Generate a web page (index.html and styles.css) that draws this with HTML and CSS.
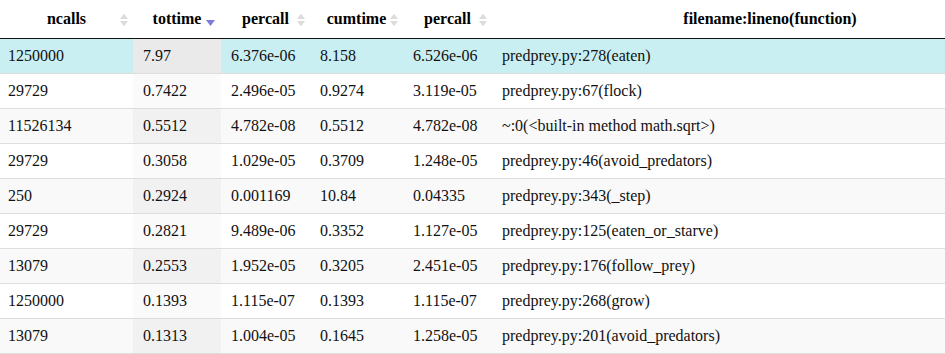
FILE: index.html
```html
<!DOCTYPE html>
<html lang="en">
<head>
  <meta charset="UTF-8">
  <title>Profile stats</title>
  <link rel="stylesheet" href="styles.css">
</head>
<body>

<div class="wrap">
  <table class="stats">
    <colgroup>
      <col class="w-ncalls">
      <col class="w-tottime">
      <col class="w-percall">
      <col class="w-cumtime">
      <col class="w-percall2">
      <col class="w-file">
    </colgroup>
    <thead>
      <tr>
        <th class="sortable">ncalls
          <svg class="sort-both" viewBox="0 0 9 14"><polygon points="0,6 4.5,0 9,6"/><polygon points="0,8 9,8 4.5,14"/></svg>
        </th>
        <th class="sortable">tottime
          <svg class="sort-desc" viewBox="0 0 9 6"><polygon points="0,0 9,0 4.5,6"/></svg>
        </th>
        <th class="sortable">percall
          <svg class="sort-both" viewBox="0 0 9 14"><polygon points="0,6 4.5,0 9,6"/><polygon points="0,8 9,8 4.5,14"/></svg>
        </th>
        <th class="sortable">cumtime
          <svg class="sort-both" viewBox="0 0 9 14"><polygon points="0,6 4.5,0 9,6"/><polygon points="0,8 9,8 4.5,14"/></svg>
        </th>
        <th class="sortable">percall
          <svg class="sort-both" viewBox="0 0 9 14"><polygon points="0,6 4.5,0 9,6"/><polygon points="0,8 9,8 4.5,14"/></svg>
        </th>
        <th>filename:lineno(function)</th>
      </tr>
    </thead>
    <tbody>
      <tr class="odd hover"><td>1250000</td><td class="sorted">7.97</td><td>6.376e-06</td><td>8.158</td><td>6.526e-06</td><td>predprey.py:278(eaten)</td></tr>
      <tr class="even"><td>29729</td><td class="sorted">0.7422</td><td>2.496e-05</td><td>0.9274</td><td>3.119e-05</td><td>predprey.py:67(flock)</td></tr>
      <tr class="odd"><td>11526134</td><td class="sorted">0.5512</td><td>4.782e-08</td><td>0.5512</td><td>4.782e-08</td><td>~:0(&lt;built-in method math.sqrt&gt;)</td></tr>
      <tr class="even"><td>29729</td><td class="sorted">0.3058</td><td>1.029e-05</td><td>0.3709</td><td>1.248e-05</td><td>predprey.py:46(avoid_predators)</td></tr>
      <tr class="odd"><td>250</td><td class="sorted">0.2924</td><td>0.001169</td><td>10.84</td><td>0.04335</td><td>predprey.py:343(_step)</td></tr>
      <tr class="even"><td>29729</td><td class="sorted">0.2821</td><td>9.489e-06</td><td>0.3352</td><td>1.127e-05</td><td>predprey.py:125(eaten_or_starve)</td></tr>
      <tr class="odd"><td>13079</td><td class="sorted">0.2553</td><td>1.952e-05</td><td>0.3205</td><td>2.451e-05</td><td>predprey.py:176(follow_prey)</td></tr>
      <tr class="even"><td>1250000</td><td class="sorted">0.1393</td><td>1.115e-07</td><td>0.1393</td><td>1.115e-07</td><td>predprey.py:268(grow)</td></tr>
      <tr class="odd"><td>13079</td><td class="sorted">0.1313</td><td>1.004e-05</td><td>0.1645</td><td>1.258e-05</td><td>predprey.py:201(avoid_predators)</td></tr>
    </tbody>
  </table>
</div>

</body>
</html>
```

FILE: styles.css
```css
html, body {
  margin: 0;
  padding: 0;
  background: #fff;
  overflow: hidden;
}

body {
  font-family: "Liberation Serif", "DejaVu Serif", serif;
  font-size: 16px;
  color: #111;
}

.wrap {
  width: 100%;
  overflow: hidden;
}

.stats {
  width: 1048px;
  table-layout: fixed;
  border-collapse: separate;
  border-spacing: 0;
  font-family: "Liberation Serif", serif;
  font-size: 16px;
}

.w-ncalls { width: 133px; }
.w-tottime { width: 88px; }
.w-percall { width: 89px; }
.w-cumtime { width: 93px; }
.w-percall2 { width: 89px; }
.w-file { width: 556px; }

.stats th {
  position: relative;
  padding: 10px 10px;
  line-height: 18px;
  font-weight: bold;
  text-align: center;
  color: #000;
  border-bottom: 1px solid #111;
  white-space: nowrap;
}

.stats td {
  padding: 8px 10px;
  line-height: 18px;
  text-align: left;
  white-space: nowrap;
  border-top: 1px solid #ddd;
}

.stats td:first-child {
  padding-left: 8px;
}

.stats tbody tr:first-child td {
  border-top: none;
}

.stats tbody tr:last-child td {
  border-bottom: 1px solid #ddd;
}

/* stripes */
.stats tr.odd { background: #f9f9f9; }
.stats tr.even { background: #fff; }
.stats tr.odd td.sorted { background: #f1f1f1; }
.stats tr.even td.sorted { background: #fafafa; }

.stats tr.hover { background: #c9eff2; }
.stats tr.hover td.sorted { background: #eaeaea; }

/* sort icons */
.sort-both {
  position: absolute;
  right: 5px;
  top: 13px;
  width: 8px;
  height: 14px;
  fill: #dcdcdc;
}

.sort-desc {
  position: absolute;
  right: 6px;
  top: 20px;
  width: 9px;
  height: 6px;
  fill: #7b7bdd;
}
```
